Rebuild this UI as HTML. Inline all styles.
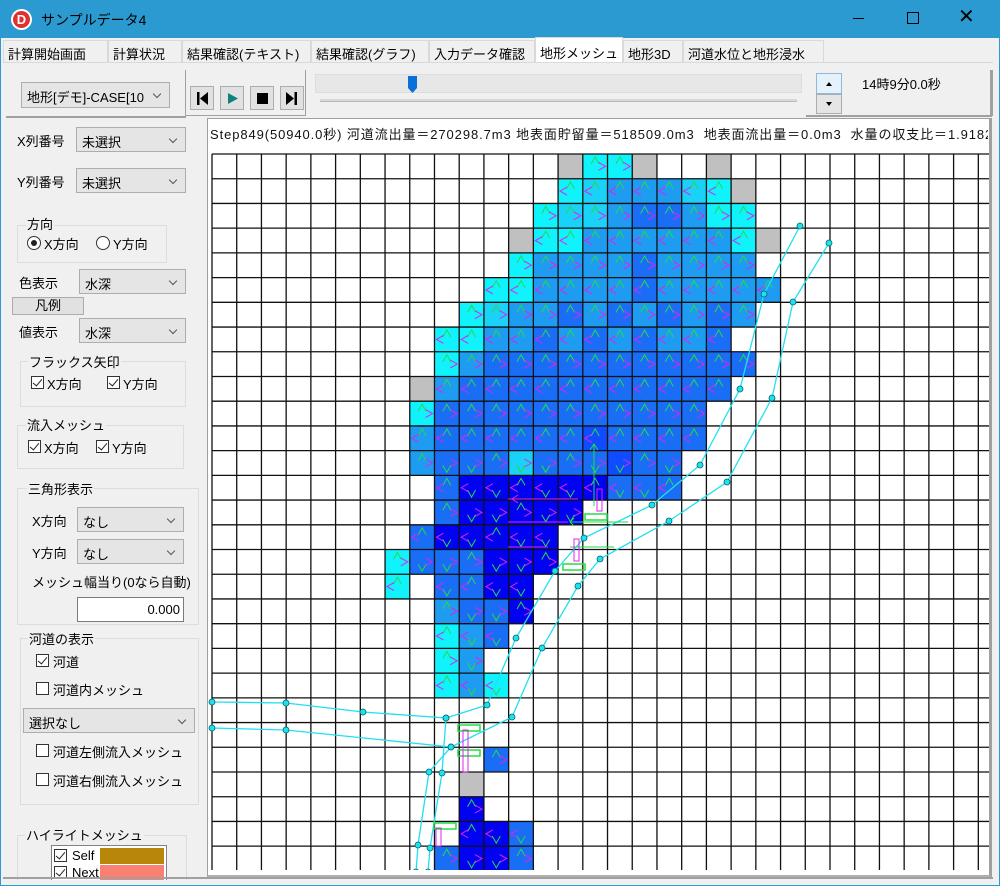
<!DOCTYPE html>
<html><head><meta charset="utf-8"><style>
*{box-sizing:border-box;margin:0;padding:0}
body{width:1000px;height:886px;overflow:hidden;background:#f0f0f0;font-family:"Liberation Sans","Noto Sans CJK JP",sans-serif;font-size:13px;color:#000;position:relative}
.a{position:absolute;white-space:nowrap}
.title{left:0;top:0;width:1000px;height:38px;background:#2b9ad0}
.tab{top:40px;height:22px;border:1px solid #d9d9d9;border-bottom:none;background:#f0f0f0;padding:3px 4px;font-size:13px}
.combo{background:#e5e5e5;border:1px solid #adadad;height:25px;padding:4px 5px;font-size:13px}
.combo:after{content:"";position:absolute;right:9px;top:8px;width:5px;height:5px;border-right:1px solid #555;border-bottom:1px solid #555;transform:rotate(45deg)}
.grp{border:1px solid #dcdcdc}
.glab{background:#f0f0f0;padding:0 1px;font-size:13px}
.cb{width:13px;height:13px;border:1px solid #333;background:#fff}
.cb.on:after{content:"";position:absolute;left:3px;top:0px;width:4px;height:8px;border-right:1.5px solid #222;border-bottom:1.5px solid #222;transform:rotate(40deg)}
.btn{width:24px;height:24px;background:#e1e1e1;border:1px solid #adadad}
</style></head><body>
<div class="a title"></div>
<div class="a" style="left:0;top:0;width:1000px;height:886px;border:1px solid #2b9ad0;pointer-events:none;z-index:9"></div>
<div class="a" style="left:11px;top:9px;width:21px;height:21px;border-radius:50%;background:#fff"></div>
<div class="a" style="left:13px;top:11px;width:17px;height:17px;border-radius:50%;background:#e03030;color:#fff;font-weight:bold;font-size:13px;text-align:center;line-height:17px">D</div>
<div class="a" style="left:41px;top:10px;font-size:14px;color:#000">サンプルデータ4</div>
<div class="a" style="left:853px;top:18px;width:11px;height:1px;background:#000"></div>
<div class="a" style="left:907px;top:12px;width:12px;height:12px;border:1px solid #000"></div>
<div class="a" style="left:958px;top:6px;font-size:20px;line-height:22px">✕</div>

<div class="a tab" style="left:3px;width:105px">計算開始画面</div>
<div class="a tab" style="left:108px;width:74px">計算状況</div>
<div class="a tab" style="left:182px;width:129px">結果確認(テキスト)</div>
<div class="a tab" style="left:311px;width:118px">結果確認(グラフ)</div>
<div class="a tab" style="left:429px;width:106px">入力データ確認</div>
<div class="a tab" style="left:535px;top:37px;height:26px;width:88px;background:#fff;padding-top:5px">地形メッシュ</div>
<div class="a tab" style="left:623px;width:60px">地形3D</div>
<div class="a tab" style="left:683px;width:141px">河道水位と地形浸水</div>
<div class="a" style="left:3px;top:62px;width:990px;height:818px;background:#f0f0f0;border-top:1px solid #d9d9d9"></div>

<!-- toolbar -->
<div class="a combo" style="left:21px;top:82px;width:149px;height:26px">地形[デモ]-CASE[10</div>
<div class="a" style="left:6px;top:116px;width:180px;height:2px;background:#a0a0a0"></div>
<div class="a" style="left:185px;top:70px;width:1px;height:46px;background:#a0a0a0"></div>
<div class="a" style="left:186px;top:115px;width:120px;height:1px;background:#a0a0a0"></div>
<div class="a" style="left:305px;top:70px;width:1px;height:46px;background:#a0a0a0"></div>
<div class="a btn" style="left:190px;top:86px"><svg width="22" height="22"><rect x="6" y="5" width="2.5" height="13"/><path d="M17 5 L9 11.5 L17 18Z"/></svg></div>
<div class="a btn" style="left:220px;top:86px"><svg width="22" height="22"><path d="M7 6 L17 11.5 L7 17Z" fill="#138080"/></svg></div>
<div class="a btn" style="left:250px;top:86px"><svg width="22" height="22"><rect x="6" y="6" width="11" height="11"/></svg></div>
<div class="a btn" style="left:280px;top:86px"><svg width="22" height="22"><path d="M5 5 L13 11.5 L5 18Z"/><rect x="13.5" y="5" width="2.5" height="13"/></svg></div>
<div class="a" style="left:315px;top:74px;width:487px;height:19px;background:#e7e7e7;border:1px solid #dcdcdc"></div>
<div class="a" style="left:408px;top:76px;width:9px;height:17px"><svg width="9" height="17"><path d="M0 0H9V12L4.5 17L0 12Z" fill="#0a6fd8"/></svg></div>
<div class="a" style="left:320px;top:99px;width:477px;height:3px;background:#d8d8d8;border-bottom:1px solid #bbb"></div>
<div class="a" style="left:816px;top:73px;width:26px;height:21px;background:#e5f1fb;border:1px solid #8fb8de"><svg width="24" height="19"><path d="M9 12h6l-3-4z"/></svg></div>
<div class="a" style="left:816px;top:94px;width:26px;height:20px;background:#e5e5e5;border:1px solid #adadad"><svg width="24" height="18"><path d="M9 7h6l-3 4z"/></svg></div>
<div class="a" style="left:862px;top:74px;font-size:13px">14時9分0.0秒</div>
<div class="a" style="left:990px;top:70px;width:3px;height:46px;background:#a0a0a0"></div>
<div class="a" style="left:806px;top:115px;width:186px;height:2px;background:#a0a0a0"></div>

<!-- grid panel -->
<div class="a" style="left:207px;top:118px;width:785px;height:760px;background:#fff;border-left:1px solid #a0a0a0;border-top:1px solid #a0a0a0;border-right:3px solid #a0a0a0;border-bottom:3px solid #b0b0b0"></div>
<div class="a" style="left:210px;top:124px;font-size:13px;letter-spacing:0.9px;color:#111;width:778px;overflow:hidden">Step849(50940.0秒) 河道流出量＝270298.7m3 地表面貯留量＝518509.0m3&nbsp; 地表面流出量＝0.0m3&nbsp; 水量の収支比＝1.9182</div>
<svg id="g" class="a" style="left:208px;top:150px" width="781" height="720"></svg>

<!-- left panel -->
<div class="a" style="left:17px;top:131px">X列番号</div>
<div class="a combo" style="left:76px;top:127px;width:110px">未選択</div>
<div class="a" style="left:17px;top:172px">Y列番号</div>
<div class="a combo" style="left:76px;top:168px;width:110px">未選択</div>
<div class="a grp" style="left:17px;top:225px;width:150px;height:38px"></div>
<div class="a glab" style="left:26px;top:214px">方向</div>
<div class="a" style="left:27px;top:236px;width:14px;height:14px;border:1px solid #333;border-radius:50%;background:#fff"><div class="a" style="left:3px;top:3px;width:6px;height:6px;border-radius:50%;background:#222"></div></div>
<div class="a" style="left:44px;top:234px">X方向</div>
<div class="a" style="left:96px;top:236px;width:14px;height:14px;border:1px solid #333;border-radius:50%;background:#fff"></div>
<div class="a" style="left:113px;top:234px">Y方向</div>
<div class="a" style="left:19px;top:273px">色表示</div>
<div class="a combo" style="left:79px;top:269px;width:107px">水深</div>
<div class="a" style="left:12px;top:297px;width:72px;height:18px;background:#e1e1e1;border:1px solid #adadad;text-align:center;font-size:13px;line-height:16px">凡例</div>
<div class="a" style="left:19px;top:322px">値表示</div>
<div class="a combo" style="left:79px;top:318px;width:107px">水深</div>
<div class="a grp" style="left:20px;top:361px;width:166px;height:46px"></div>
<div class="a glab" style="left:28px;top:352px">フラックス矢印</div>
<div class="a cb on" style="left:31px;top:376px"></div><div class="a" style="left:47px;top:374px">X方向</div>
<div class="a cb on" style="left:107px;top:376px"></div><div class="a" style="left:123px;top:374px">Y方向</div>
<div class="a grp" style="left:17px;top:425px;width:167px;height:44px"></div>
<div class="a glab" style="left:26px;top:415px">流入メッシュ</div>
<div class="a cb on" style="left:28px;top:440px"></div><div class="a" style="left:44px;top:438px">X方向</div>
<div class="a cb on" style="left:96px;top:440px"></div><div class="a" style="left:112px;top:438px">Y方向</div>
<div class="a grp" style="left:17px;top:488px;width:182px;height:137px"></div>
<div class="a glab" style="left:27px;top:479px">三角形表示</div>
<div class="a" style="left:32px;top:511px">X方向</div>
<div class="a combo" style="left:77px;top:507px;width:107px">なし</div>
<div class="a" style="left:32px;top:543px">Y方向</div>
<div class="a combo" style="left:77px;top:539px;width:107px">なし</div>
<div class="a" style="left:32px;top:572px">メッシュ幅当り(0なら自動)</div>
<div class="a" style="left:77px;top:597px;width:107px;height:25px;background:#fff;border:1px solid #7a7a7a;text-align:right;padding:4px 3px">0.000</div>
<div class="a grp" style="left:20px;top:638px;width:179px;height:167px"></div>
<div class="a glab" style="left:28px;top:629px">河道の表示</div>
<div class="a cb on" style="left:36px;top:654px"></div><div class="a" style="left:53px;top:652px">河道</div>
<div class="a cb" style="left:36px;top:682px"></div><div class="a" style="left:53px;top:680px">河道内メッシュ</div>
<div class="a combo" style="left:23px;top:708px;width:172px">選択なし</div>
<div class="a cb" style="left:36px;top:744px"></div><div class="a" style="left:53px;top:742px">河道左側流入メッシュ</div>
<div class="a cb" style="left:36px;top:773px"></div><div class="a" style="left:53px;top:771px">河道右側流入メッシュ</div>
<div class="a grp" style="left:17px;top:835px;width:170px;height:50px"></div>
<div class="a glab" style="left:25px;top:825px">ハイライトメッシュ</div>
<div class="a" style="left:51px;top:845px;width:116px;height:36px;background:#fff;border:1px solid #828282"></div>
<div class="a" style="left:100px;top:848px;width:64px;height:16px;background:#b8860b"></div>
<div class="a" style="left:100px;top:865px;width:64px;height:16px;background:#fa8072"></div>
<div class="a cb on" style="left:54px;top:849px"></div><div class="a" style="left:72px;top:848px;font-size:13px">Self</div>
<div class="a cb on" style="left:54px;top:866px"></div><div class="a" style="left:72px;top:865px;font-size:13px">Next</div>
<div class="a" style="left:3px;top:877px;width:990px;height:2px;background:#a0a0a0"></div>
<div class="a" style="left:0;top:880px;width:1000px;height:6px;background:#f0f0f0"></div>

<script>
var S=24.72,X0=4,Y0=4;
var col={C:"#10f2fc",K:"#1ad2f8",L:"#1e9cf2",M:"#1a6ef6",D:"#0f4cff",X:"#0202f2",G:"#c0c0c0"};
var rows={0:[14,"GCCG..G"],1:[14,"CKLLLKCG"],2:[13,"CKKLMMLCC"],3:[12,"GCCLLLLLLCG"],4:[12,"CLLLLMLLLL"],5:[11,"CCLLLLMLLLLL"],6:[10,"CKLLMLMLMLML"],7:[9,"CCLLMLMLMLLM"],8:[9,"CLMMMMMMMMMMM"],9:[8,"GLMMMMMMMMMMM"],10:[8,"CMMMMMMMMMMM"],11:[8,"LMMMMMMDMMMM"],12:[8,"LMMMKMMMDMM"],13:[9,"MXXXXXXMMM"],14:[9,"MXXXXX"],15:[8,"MXXXXX"],16:[7,"CMMMXXX"],17:[7,"C.MMXX"],18:[9,"LMMX"],19:[9,"CLM"],20:[9,"CL"],21:[9,"CLC"],24:[11,"M"],25:[10,"G"],26:[10,"X"],27:[10,"XXM"],28:[9,"MXXM"]};
var h="";
for(var r in rows){var c0=rows[r][0],s=rows[r][1];for(var i=0;i<s.length;i++){var ch=s[i];if(ch==".")continue;var x=X0+(c0+i)*S,y=Y0+r*S;h+='<rect x="'+x+'" y="'+y+'" width="'+S+'" height="'+S+'" fill="'+col[ch]+'"/>';
if(ch!="G"){var cx=x+S/2;var up=(r<12||(r>=9&&i%3==0));
if(up)h+='<path d="M'+(cx-4)+' '+(y+10)+'L'+cx+' '+(y+3)+'L'+(cx+4)+' '+(y+10)+'" stroke="#22dd44" fill="none"/>';
else h+='<path d="M'+(cx-4)+' '+(y+S-10)+'L'+cx+' '+(y+S-3)+'L'+(cx+4)+' '+(y+S-10)+'" stroke="#22dd44" fill="none"/>';
var cy=y+S/2;if((c0+i+r)%2==0)h+='<path d="M'+(x+S-9)+' '+(cy-4)+'L'+(x+S-2)+' '+cy+'L'+(x+S-9)+' '+(cy+4)+'" stroke="#e020f0" fill="none"/>';
else h+='<path d="M'+(x+9)+' '+(cy-4)+'L'+(x+2)+' '+cy+'L'+(x+9)+' '+(cy+4)+'" stroke="#e020f0" fill="none"/>';}}}
for(var k=0;k<32;k++){var x=X0+k*S;h+='<line x1="'+x+'" y1="'+Y0+'" x2="'+x+'" y2="720" stroke="#111" stroke-width="1.3"/>';}
for(var k=0;k<30;k++){var y=Y0+k*S;h+='<line x1="'+X0+'" y1="'+y+'" x2="781" y2="'+y+'" stroke="#111" stroke-width="1.3"/>';}
function pl(p){var q=p.map(function(v,i){return i%2?v-150:v-208});var s="";for(var i=0;i<q.length;i+=2)s+=q[i]+","+q[i+1]+" ";
var o='<polyline points="'+s+'" fill="none" stroke="#20e0f0" stroke-width="1.3"/>';
for(var i=0;i<q.length;i+=2)o+='<circle cx="'+q[i]+'" cy="'+q[i+1]+'" r="3" fill="#20e0f0" stroke="#066" stroke-width="0.8"/>';return o;}
h+=pl([800,226,764,294,740,389,700,465,652,505,584,538,555,571,516,638,487,705,446,718,442,773,430,848,428,872]);
h+=pl([829,243,793,302,772,398,727,482,669,521,600,559,578,586,542,648,512,717,451,747,429,772,418,845,416,872]);
h+=pl([212,702,286,703,363,712,446,718]);
h+=pl([212,728,286,730,451,747]);
h+='<path d="M386 294V356M382 300L386 294L390 300M362 372H420M366 368L362 372L366 376M362 397H406" stroke="#22dd44" fill="none"/>';
h+='<path d="M300 349H370M300 372H360M300 397H340M310 345L304 349L310 353" stroke="#e020f0" fill="none"/>';
h+='<rect x="377" y="364" width="22" height="6" fill="none" stroke="#22dd44" stroke-width="1.5"/><rect x="355" y="414" width="22" height="6" fill="none" stroke="#22dd44" stroke-width="1.5"/><rect x="389" y="339" width="5" height="22" fill="none" stroke="#e020f0"/><rect x="366" y="389" width="5" height="22" fill="none" stroke="#e020f0"/>';
h+='<rect x="250" y="575" width="22" height="6" fill="none" stroke="#22dd44" stroke-width="1.5"/><rect x="250" y="600" width="22" height="6" fill="none" stroke="#22dd44" stroke-width="1.5"/><rect x="255" y="580" width="5" height="42" fill="none" stroke="#e020f0"/><rect x="226" y="673" width="22" height="6" fill="none" stroke="#22dd44" stroke-width="1.5"/><rect x="228" y="678" width="5" height="18" fill="none" stroke="#e020f0"/>';
document.getElementById("g").innerHTML=h;
</script>
</body></html>
